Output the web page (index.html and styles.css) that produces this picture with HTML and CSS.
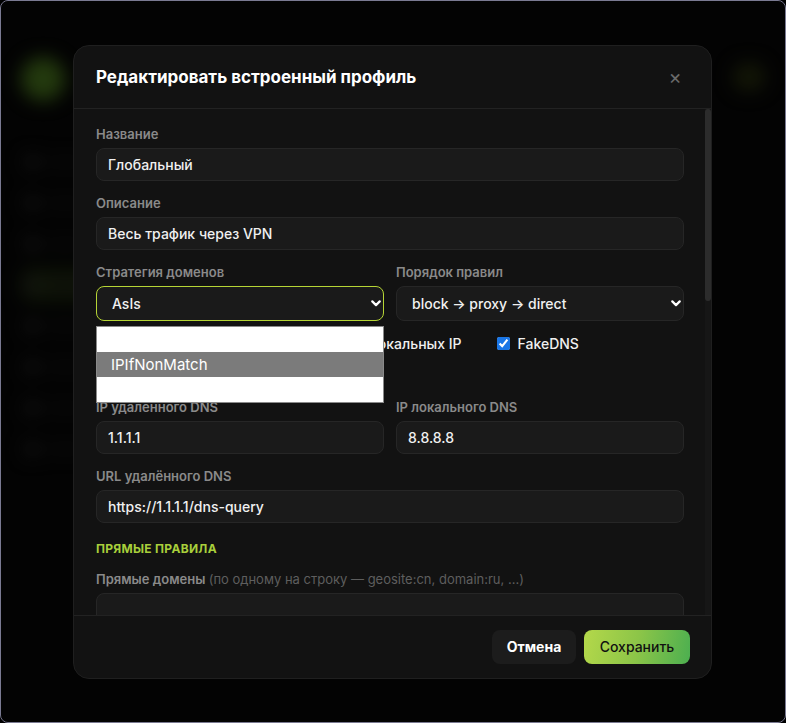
FILE: index.html
```html
<!DOCTYPE html>
<html lang="ru">
<head>
    <meta charset="UTF-8">
    <meta name="viewport" content="width=device-width, initial-scale=1.0">
    <title>Профили</title>
    <link rel="stylesheet" href="styles.css">
</head>
<body>
    <div class="window">
        <!-- приложение под модальным окном -->
        <div class="app">
            <aside class="sidebar">
                <div class="logo"></div>
                <nav class="nav">
                    <div class="nav-item"><span class="nav-icon"></span><span class="nav-text"></span></div>
                    <div class="nav-item"><span class="nav-icon"></span><span class="nav-text"></span></div>
                    <div class="nav-item"><span class="nav-icon"></span><span class="nav-text"></span></div>
                    <div class="nav-item active"><span class="nav-icon"></span><span class="nav-text"></span></div>
                    <div class="nav-item"><span class="nav-icon"></span><span class="nav-text"></span></div>
                    <div class="nav-item"><span class="nav-icon"></span><span class="nav-text"></span></div>
                    <div class="nav-item"><span class="nav-icon"></span><span class="nav-text"></span></div>
                    <div class="nav-item"><span class="nav-icon"></span><span class="nav-text"></span></div>
                </nav>
            </aside>
            <main class="main">
                <header class="topbar">
                    <div class="topbar-title"></div>
                    <div class="status-pill"></div>
                </header>
            </main>
        </div>

        <div class="overlay">
            <div class="modal">
                <div class="modal-header">
                    <h2>Редактировать встроенный профиль</h2>
                    <button class="close-btn">&times;</button>
                </div>

                <div class="modal-main">
                    <div class="modal-body">
                        <div class="field">
                            <label>Название</label>
                            <input type="text" value="Глобальный">
                        </div>
                        <div class="field">
                            <label>Описание</label>
                            <input type="text" value="Весь трафик через VPN">
                        </div>

                        <div class="field-row">
                            <div class="field">
                                <label>Стратегия доменов</label>
                                <div class="select-wrap">
                                    <select class="focused">
                                        <option>AsIs</option>
                                        <option>IPIfNonMatch</option>
                                        <option>IPOnDemand</option>
                                    </select>
                                    <svg class="chevron" width="10" height="7" viewBox="0 0 10 7"><path d="M1.3 1.4 5 5.1 8.7 1.4" fill="none" stroke="#fff" stroke-width="2.2" stroke-linecap="round" stroke-linejoin="round"/></svg>
                                    <!-- открытый список вариантов -->
                                    <ul class="dropdown">
                                        <li>AsIs</li>
                                        <li class="hover">IPIfNonMatch</li>
                                        <li>IPOnDemand</li>
                                    </ul>
                                </div>
                            </div>
                            <div class="field">
                                <label>Порядок правил</label>
                                <div class="select-wrap">
                                    <select>
                                        <option>block → proxy → direct</option>
                                    </select>
                                    <svg class="chevron" width="10" height="7" viewBox="0 0 10 7"><path d="M1.3 1.4 5 5.1 8.7 1.4" fill="none" stroke="#fff" stroke-width="2.2" stroke-linecap="round" stroke-linejoin="round"/></svg>
                                </div>
                            </div>
                        </div>

                        <div class="check-row">
                            <label class="check"><input type="checkbox" checked> Блокировка рекламы</label>
                            <label class="check"><input type="checkbox" checked> Обход локальных IP</label>
                            <label class="check"><input type="checkbox" checked> FakeDNS</label>
                        </div>

                        <h3 class="section-title">DNS</h3>
                        <div class="field-row">
                            <div class="field">
                                <label>IP удалённого DNS</label>
                                <input type="text" value="1.1.1.1">
                            </div>
                            <div class="field">
                                <label>IP локального DNS</label>
                                <input type="text" value="8.8.8.8">
                            </div>
                        </div>
                        <div class="field">
                            <label>URL удалённого DNS</label>
                            <input type="text" value="https://1.1.1.1/dns-query">
                        </div>

                        <h3 class="section-title">Прямые правила</h3>
                        <div class="field">
                            <label>Прямые домены <span class="hint">(по одному на строку — geosite:cn, domain:ru, ...)</span></label>
                            <textarea></textarea>
                        </div>
                        <div class="field">
                            <label>Прямые IP <span class="hint">(geoip:private, 10.0.0.0/8, ...)</span></label>
                            <textarea></textarea>
                        </div>

                        <h3 class="section-title">Правила прокси</h3>
                        <div class="field">
                            <label>Домены через прокси</label>
                            <textarea></textarea>
                        </div>
                        <div class="field">
                            <label>IP через прокси</label>
                            <textarea></textarea>
                        </div>

                        <h3 class="section-title">Блокировка</h3>
                        <div class="field">
                            <label>Заблокированные домены</label>
                            <textarea></textarea>
                        </div>
                        <div class="field">
                            <label>Заблокированные IP</label>
                            <textarea></textarea>
                        </div>
                    </div>
                    <div class="scrollbar"><div class="scrollbar-thumb"></div></div>
                </div>

                <div class="modal-footer">
                    <button class="btn btn-cancel">Отмена</button>
                    <button class="btn btn-save">Сохранить</button>
                </div>
            </div>
        </div>
    </div>
</body>
</html>
```

FILE: styles.css
```css
* {
    box-sizing: border-box;
    margin: 0;
    padding: 0;
}

body {
    width: 786px;
    height: 723px;
    overflow: hidden;
    background-color: #000;
    font-family: Inter, "Noto Sans", "Liberation Sans", sans-serif;
}

.window {
    position: relative;
    height: 723px;
    border: 1px solid #7a7a92;
    border-radius: 8px;
    overflow: hidden;
    background-color: #070707;
}

/* приложение на заднем плане, размыто */
.app {
    display: flex;
    height: 100%;
    filter: blur(9px);
}

.sidebar {
    width: 110px;
    padding: 56px 14px 0 20px;
}

.logo {
    width: 44px;
    height: 44px;
    border-radius: 50%;
    background-color: #4f8020;
}

.nav {
    display: flex;
    flex-direction: column;
    gap: 9px;
    margin-top: 45px;
}

.nav-item {
    display: flex;
    align-items: center;
    gap: 8px;
    height: 32px;
    padding: 0 4px;
    border-radius: 8px;
}

.nav-icon {
    width: 14px;
    height: 14px;
    border-radius: 4px;
    background-color: #2a2a2a;
}

.nav-text {
    width: 36px;
    height: 8px;
    border-radius: 4px;
    background-color: #1c1c1c;
}

.nav-item.active {
    background-color: #223010;
}

.main {
    flex: 1;
    padding: 62px 20px 0 40px;
}

.topbar {
    display: flex;
    justify-content: space-between;
    align-items: center;
}

.topbar-title {
    width: 120px;
    height: 14px;
    border-radius: 6px;
    background-color: #1a1a1a;
}

.status-pill {
    width: 32px;
    height: 28px;
    border-radius: 14px;
    background-color: #2b3210;
}

.overlay {
    position: absolute;
    inset: 0;
    display: flex;
    align-items: center;
    justify-content: center;
    background-color: rgba(0, 0, 0, 0.55);
}

/* модальное окно */
.modal {
    width: 639px;
    height: 634px;
    margin-left: -1px;
    display: flex;
    flex-direction: column;
    background-color: #121212;
    border: 1px solid #1f1f1f;
    border-radius: 16px;
    overflow: hidden;
}

.modal-header {
    display: flex;
    justify-content: space-between;
    align-items: center;
    height: 63px;
    padding: 0 24px 0 22px;
    border-bottom: 1px solid #222;
}

.modal-header h2 {
    font-size: 17px;
    font-weight: 700;
    color: #fff;
    line-height: 22px;
}

.close-btn {
    width: 24px;
    height: 24px;
    border: none;
    background: none;
    color: #6a6a6a;
    font-size: 20px;
    line-height: 24px;
    font-family: inherit;
}

.modal-main {
    flex: 1;
    display: flex;
    min-height: 0;
}

.modal-body {
    flex: 1;
    overflow: hidden;
    padding: 16px 21px 24px 22px;
}

.scrollbar {
    width: 6px;
    background-color: #161616;
}

.scrollbar-thumb {
    height: 192px;
    border-radius: 3px;
    background-color: #2c2c2c;
}

.field {
    margin-bottom: 13px;
}

.field > label {
    display: block;
    font-size: 13px;
    font-weight: 600;
    line-height: 18px;
    color: #8a8a8a;
    margin-bottom: 5px;
}

.hint {
    font-weight: 400;
    color: #5e5e5e;
}

input[type="text"],
textarea,
select {
    display: block;
    width: 100%;
    height: 33px;
    padding: 0 11px;
    background-color: #1a1a1a;
    border: 1px solid #262626;
    border-radius: 8px;
    color: #f0f0f0;
    font-family: inherit;
    font-size: 14px;
    font-weight: 500;
    outline: none;
}

textarea {
    height: 76px;
    padding: 8px 11px;
    resize: none;
}

.field-row {
    display: grid;
    grid-template-columns: 1fr 1fr;
    gap: 12px;
}

.select-wrap {
    position: relative;
}

select {
    appearance: none;
    height: 35px;
    padding: 0 28px 0 15px;
}

select.focused {
    border-color: #b6d535;
}

.chevron {
    position: absolute;
    right: 3px;
    top: 14px;
}

.dropdown {
    position: absolute;
    top: 40px;
    left: 0;
    right: 0;
    z-index: 5;
    list-style: none;
    background-color: #fff;
    border: 1px solid #8a8a8a;
}

.dropdown li {
    height: 25px;
    line-height: 25px;
    padding-left: 14px;
    font-size: 15px;
    color: #fff;
}

.dropdown li.hover {
    background-color: #7b7b7b;
}

.check-row {
    display: flex;
    align-items: center;
    gap: 35px;
    height: 14px;
    margin-top: 3px;
}

.check {
    display: flex;
    align-items: center;
    gap: 8px;
    font-size: 14px;
    font-weight: 500;
    color: #f0f0f0;
}

.check input {
    margin: 0;
    width: 13px;
    height: 13px;
    accent-color: #1a76e6;
}

.section-title {
    margin: 18px 0 13px;
    font-size: 12px;
    font-weight: 700;
    line-height: 16px;
    letter-spacing: 0.3px;
    text-transform: uppercase;
    color: #a8cf3b;
}

.modal-footer {
    display: flex;
    justify-content: flex-end;
    gap: 8px;
    height: 63px;
    padding: 14px 21px 0 0;
    border-top: 1px solid #222;
}

.btn {
    height: 34px;
    border: none;
    border-radius: 8px;
    font-family: inherit;
    font-size: 14px;
    cursor: pointer;
}

.btn-cancel {
    width: 84px;
    background-color: #1c1c1c;
    color: #fff;
    font-weight: 700;
}

.btn-save {
    width: 106px;
    background: linear-gradient(100deg, #b4d84a 0%, #8cc548 50%, #4caf50 100%);
    color: #111;
    font-weight: 500;
}
```
